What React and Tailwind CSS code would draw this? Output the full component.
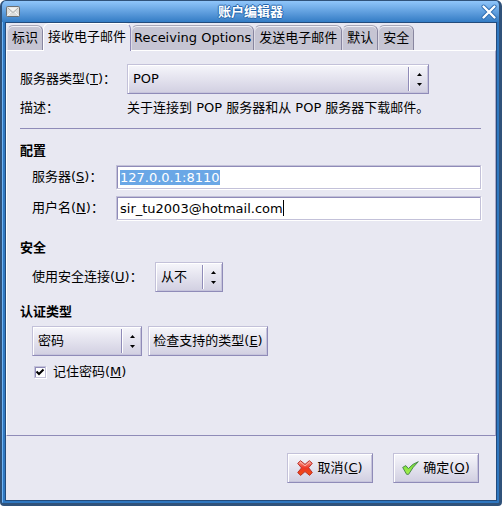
import { useEffect, useRef, useState } from 'react'
import clsx from 'clsx'

const TABS = ['标识', '接收电子邮件', 'Receiving Options', '发送电子邮件', '默认', '安全']

const RAISED =
  'border border-t-[#c3c1d9] border-l-[#c3c1d9] border-r-[#8f8bb8] border-b-[#8f8bb8] bg-linear-to-b from-[#f6f6fb] to-[#d1cfe1] shadow-[inset_1px_1px_0_#ffffff,inset_-1px_-1px_0_#c6c4dc]'

function MailIcon() {
  return (
    <svg className="w-[14px] h-[11px]" viewBox="0 0 14 11">
      <rect x="0.5" y="0.5" width="13" height="10" rx="1" fill="#dededc" stroke="#6c7072" />
      <path d="M1.5 9.5 L5.5 5.5 M12.5 9.5 L8.5 5.5" stroke="#f8f8f8" fill="none" />
      <path d="M1.5 1.5 L7 6.5 L12.5 1.5" stroke="#a9aaa8" fill="#f2f2f0" />
    </svg>
  )
}

function CloseIcon() {
  return (
    <svg className="w-4 h-4" viewBox="0 0 16 16" fill="none" strokeLinecap="round">
      <path d="M2.5 2.5 L13.5 13.5 M13.5 2.5 L2.5 13.5" stroke="#2b6aae" strokeWidth="4" />
      <path d="M2.5 2.5 L13.5 13.5 M13.5 2.5 L2.5 13.5" stroke="#ffffff" strokeWidth="2.4" />
    </svg>
  )
}

function CancelIcon() {
  return (
    <svg className="w-4 h-4" viewBox="0 0 16 16">
      <defs>
        <linearGradient id="cancel" x1="0" y1="0" x2="0" y2="1">
          <stop offset="0" stopColor="#f9a093" />
          <stop offset="0.5" stopColor="#ee3526" />
          <stop offset="1" stopColor="#f0500f" />
        </linearGradient>
      </defs>
      <path
        d="M3.5 0.7 L8 4.4 L12.3 0.7 L15.3 3.3 L11.6 7.7 L15.3 12.5 L12.6 15.4 L8 11.6 L3.6 15.4 L0.7 12.6 L4.5 7.9 L0.7 3.4 Z"
        fill="url(#cancel)"
        stroke="#b8302b"
        strokeLinejoin="round"
      />
      <path d="M2.4 3.4 L3.6 2.2 L8 6 L12.3 2.2 L13.6 3.4" fill="none" stroke="#fbc4b8" strokeOpacity="0.8" />
    </svg>
  )
}

function OkIcon() {
  return (
    <svg className="w-[17px] h-[14px]" viewBox="0 0 17 14">
      <defs>
        <linearGradient id="ok" x1="0" y1="0" x2="0" y2="1">
          <stop offset="0" stopColor="#6fdb35" />
          <stop offset="1" stopColor="#a6f04e" />
        </linearGradient>
      </defs>
      <path
        d="M0.7 6.4 L3.8 4.6 L6.4 7.6 Q10.5 2.6 16.3 0.7 Q10.8 5.8 6.6 13.3 L4.6 13.3 Z"
        fill="url(#ok)"
        stroke="#4c8a4c"
        strokeLinejoin="round"
      />
    </svg>
  )
}

function Arrows() {
  return (
    <svg className="w-[5px] h-[13px]" viewBox="0 0 5 13" fill="#000000">
      <path d="M2.5 0 L5 3 H0 Z" />
      <path d="M0 10 H5 L2.5 13 Z" />
    </svg>
  )
}

// Raised combo box with the split arrow area on its right end
function Combo({ id, label, options, className }) {
  return (
    <div className={clsx('relative h-[30px]', className)}>
      <select
        id={id}
        aria-label={label}
        className={clsx('w-full h-full appearance-none pl-[5px] pr-[22px] leading-4 outline-none', RAISED)}
      >
        {options.map((o) => (
          <option key={o}>{o}</option>
        ))}
      </select>
      <div className="absolute right-0 inset-y-[3px] w-[21px] border-l border-[#8f8bb8] shadow-[inset_1px_0_0_#ffffff] flex items-center justify-center pointer-events-none">
        <Arrows />
      </div>
    </div>
  )
}

const FIELD =
  'w-full h-6 border border-[#c3c1d9] bg-white px-[3px] text-black outline-none shadow-[inset_1px_1px_0_#8f8bb8,1px_1px_0_#ffffff] selection:bg-[#6aa7e6] selection:text-white'

function DialogButton({ icon, text, accessKey }) {
  return (
    <button type="button" className={clsx('w-[86px] h-[30px] flex items-center justify-center gap-1', RAISED)}>
      {icon}
      <span>
        {text}(<u>{accessKey}</u>)
      </span>
    </button>
  )
}

export default function App() {
  const [tab, setTab] = useState(1)
  const [server, setServer] = useState('127.0.0.1:8110')
  const [user, setUser] = useState('sir_tu2003@hotmail.com')
  const [remember, setRemember] = useState(true)
  const serverRef = useRef(null)

  useEffect(() => {
    serverRef.current.focus()
    serverRef.current.select()
  }, [])

  return (
    <div className="min-h-screen flex flex-col rounded-t-md rounded-b-sm bg-[#2f77c0] border-t border-l-2 border-r-[3px] border-b-[3px] border-[#30527a] font-['DejaVu_Sans','Noto_Sans_CJK_SC',sans-serif] text-[13px] leading-4 text-black overflow-hidden">
      {/* Title bar */}
      <header className="h-[21px] shrink-0 flex items-center pl-1 pr-[2px] bg-linear-to-b from-[#90c6fa] to-[#337cc5]">
        <MailIcon />
        <h1 className="flex-1 text-center font-bold text-white [text-shadow:1px_0_#2465ac,-1px_0_#2465ac,0_1px_#2465ac,0_-1px_#2465ac]">
          账户编辑器
        </h1>
        <button type="button" aria-label="关闭">
          <CloseIcon />
        </button>
      </header>

      <div className="flex-1 flex flex-col border-l border-[#70b4f4]">
        <main className="flex-1 flex flex-col mx-[2px] mb-[2px] border border-[#234b7c] bg-[#e8e8f2]">
          {/* Tabs */}
          <div role="tablist" className="flex items-end h-[27px] pt-px pl-px">
            {TABS.map((name, i) => (
              <button
                key={name}
                type="button"
                role="tab"
                aria-selected={i === tab}
                onClick={() => setTab(i)}
                className={clsx(
                  'rounded-t-md border border-b-0 whitespace-nowrap',
                  name.length > 6 ? 'px-0.5' : 'px-1',
                  i === tab
                    ? 'h-7 -mb-px relative bg-[#e8e8f2] border-t-white border-l-white border-r-[#8f8bb8] pb-px'
                    : 'h-[25px] bg-[#c6c5d3] border-t-[#a9a8b8] border-l-[#dddce6] border-r-[#8886a0] shadow-[inset_0_1px_0_#efeff5]'
                )}
              >
                {name}
              </button>
            ))}
          </div>

          <section className="flex-1 border border-t-white border-l-white border-r-[#aaa8c8] border-b-[#8f8bb8] pt-[13px] pl-[13px] pr-[14px] pb-8">
            <div className="flex items-center">
              <label htmlFor="type" className="w-[107px]">
                服务器类型(<u>T</u>)：
              </label>
              <Combo id="type" options={['POP']} className="flex-1 mr-[52px]" />
            </div>
            <div className="flex mt-[6px]">
              <span className="w-[107px]">描述：</span>
              <p>关于连接到 POP 服务器和从 POP 服务器下载邮件。</p>
            </div>
            <hr className="mt-3 border-0 h-px bg-[#8f8bb8]" />

            <h2 className="mt-[14px] font-bold">配置</h2>
            <div className="pl-3 mt-[6px] flex flex-col gap-[7px]">
              <div className="flex items-center">
                <label htmlFor="server" className="w-[84px]">
                  服务器(<u>S</u>)：
                </label>
                <div className="flex-1">
                  <input
                    id="server"
                    ref={serverRef}
                    className={FIELD}
                    value={server}
                    onChange={(e) => setServer(e.target.value)}
                  />
                </div>
              </div>
              <div className="flex items-center">
                <label htmlFor="user" className="w-[84px]">
                  用户名(<u>N</u>)：
                </label>
                <div className="flex-1 relative">
                  <input id="user" className={FIELD} value={user} onChange={(e) => setUser(e.target.value)} />
                  <span className="absolute left-[167px] top-1 w-px h-4 bg-black" />
                </div>
              </div>
            </div>

            <h2 className="mt-5 font-bold">安全</h2>
            <div className="pl-3 mt-[6px] flex items-center">
              <label htmlFor="secure" className="w-[123px]">
                使用安全连接(<u>U</u>)：
              </label>
              <Combo id="secure" options={['从不']} className="w-[68px]" />
            </div>

            <h2 className="mt-3 font-bold">认证类型</h2>
            <div className="pl-3 mt-[6px] flex items-center gap-[6px]">
              <Combo id="auth" label="认证类型" options={['密码']} className="w-[110px]" />
              <button type="button" className={clsx('w-[120px] h-[30px] whitespace-nowrap', RAISED)}>
                检查支持的类型(<u>E</u>)
              </button>
            </div>
            <label className="ml-[14px] mt-2 flex items-center gap-[7px] w-fit">
              <span className="relative w-3 h-3">
                <input
                  type="checkbox"
                  checked={remember}
                  onChange={(e) => setRemember(e.target.checked)}
                  className="block w-3 h-3 appearance-none bg-white border border-[#c3c1d9] shadow-[inset_1px_1px_0_#8f8bb8,1px_1px_0_#ffffff]"
                />
                {remember && (
                  <svg className="absolute inset-0 w-3 h-3 pointer-events-none" viewBox="0 0 12 12">
                    <path d="M2.5 5.5 L5 8 L9.5 3.5" fill="none" stroke="#000000" strokeWidth="2" />
                  </svg>
                )}
              </span>
              <span>
                记住密码(<u>M</u>)
              </span>
            </label>
          </section>

          <footer className="flex justify-end gap-5 pt-[17px] pb-[17px] pr-[17px]">
            <DialogButton icon={<CancelIcon />} text="取消" accessKey="C" />
            <DialogButton icon={<OkIcon />} text="确定" accessKey="O" />
          </footer>
        </main>
      </div>
    </div>
  )
}
